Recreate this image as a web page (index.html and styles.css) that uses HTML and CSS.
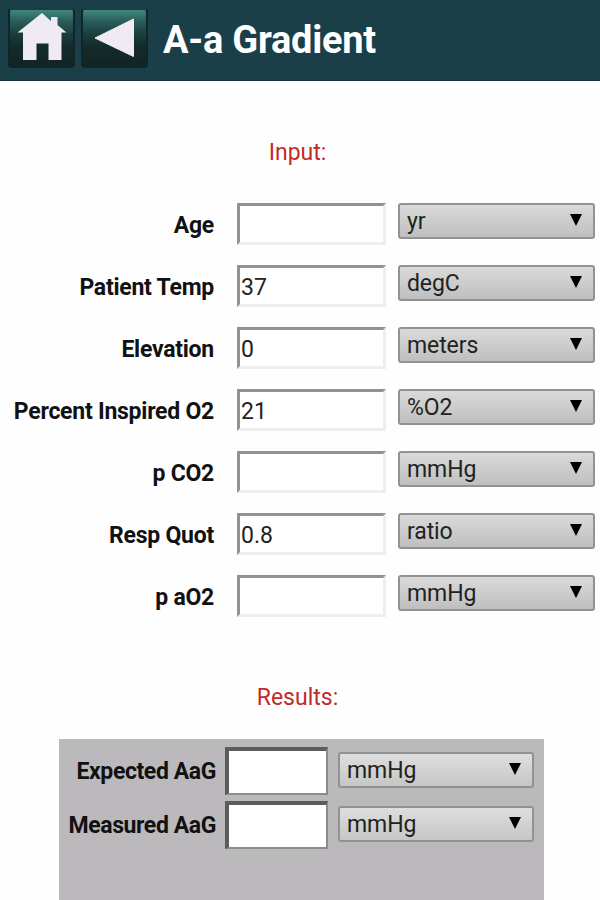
FILE: index.html
```html
<!DOCTYPE html>
<html lang="en">
<head>
    <meta charset="UTF-8">
    <meta name="viewport" content="width=device-width, initial-scale=1.0">
    <title>A-a Gradient</title>
    <link rel="stylesheet" href="styles.css">
</head>
<body>
    <header>
        <a class="nav-button" href="#" aria-label="Home">
            <svg width="50" height="48" viewBox="0 0 50 48">
                <path d="M25 0 L34 8 V4 H40.500 V12 L49.500 19.500 H44.500 V47 H31.500 V30.500 H19.500 V47 H6 V19.500 H0.500 Z" fill="#f0eaf2"/>
            </svg>
        </a>
        <a class="nav-button" href="#" aria-label="Back">
            <svg width="50" height="48" viewBox="0 0 50 48">
                <path d="M5 25 L43.500 6 V43.500 Z" fill="#f0eaf2" stroke="#f0eaf2" stroke-linejoin="round"/>
            </svg>
        </a>
        <h1>A-a Gradient</h1>
    </header>

    <main>
        <!-- Input Section -->
        <h2>Input:</h2>
        <form class="inputs">
            <div class="row">
                <label for="age">Age</label>
                <input type="text" id="age">
                <div class="unit"><select><option>yr</option></select></div>
            </div>
            <div class="row">
                <label for="temp">Patient Temp</label>
                <input type="text" id="temp" value="37">
                <div class="unit"><select><option>degC</option></select></div>
            </div>
            <div class="row">
                <label for="elevation">Elevation</label>
                <input type="text" id="elevation" value="0">
                <div class="unit"><select><option>meters</option></select></div>
            </div>
            <div class="row">
                <label for="fio2">Percent Inspired O2</label>
                <input type="text" id="fio2" value="21">
                <div class="unit"><select><option>%O2</option></select></div>
            </div>
            <div class="row">
                <label for="pco2">p CO2</label>
                <input type="text" id="pco2">
                <div class="unit"><select><option>mmHg</option></select></div>
            </div>
            <div class="row">
                <label for="quot">Resp Quot</label>
                <input type="text" id="quot" value="0.8">
                <div class="unit"><select><option>ratio</option></select></div>
            </div>
            <div class="row">
                <label for="pao2">p aO2</label>
                <input type="text" id="pao2">
                <div class="unit"><select><option>mmHg</option></select></div>
            </div>
        </form>

        <!-- Results Section -->
        <h2 class="results-title">Results:</h2>
        <section class="results">
            <div class="row">
                <label for="expected">Expected AaG</label>
                <input type="text" id="expected" readonly>
                <div class="unit"><select><option>mmHg</option></select></div>
            </div>
            <div class="row">
                <label for="measured">Measured AaG</label>
                <input type="text" id="measured" readonly>
                <div class="unit"><select><option>mmHg</option></select></div>
            </div>
        </section>
    </main>
</body>
</html>
```

FILE: styles.css
```css
* {
    box-sizing: border-box;
}
body {
    margin: 0;
    height: 900px;
    overflow: hidden;
    background: #fefefe;
    color: #111;
    font-family: Roboto, sans-serif;
    font-size: 23px;
}
header {
    display: flex;
    height: 81px;
    padding: 8px 8px 0;
    gap: 6px;
    background: #1b3f49;
    border-bottom: 1px solid #14323b;
}
.nav-button {
    display: flex;
    justify-content: center;
    width: 67px;
    height: 60px;
    padding-top: 3px;
    border: 2px solid #10262b;
    border-top-color: #1a3d42;
    border-radius: 4px;
    background: linear-gradient(#438781 0%, #2c605e 18%, #1a3f3f 42%, #142b2b 65%, #122423 100%);
}
h1 {
    margin: 10px 0 0 9px;
    color: #fff;
    font-size: 38px;
    line-height: 45px;
    font-weight: 700;
    letter-spacing: -0.25px;
}
main {
    display: flex;
    flex-direction: column;
    height: 819px;
}
h2 {
    width: 595px;
    margin: 58px 0 0;
    color: #c22a2a;
    font-size: 23px;
    line-height: 28px;
    font-weight: 400;
    text-align: center;
}
.inputs {
    display: flex;
    flex-direction: column;
    gap: 20px;
    margin-top: 36px;
}
.row {
    display: grid;
    column-gap: 12px;
    height: 42px;
}
.inputs .row {
    grid-template-columns: 225px 149px 197px;
}
label {
    padding-right: 11px;
    font-weight: 700;
    line-height: 45px;
    letter-spacing: -0.25px;
    text-align: right;
    white-space: nowrap;
}
input {
    width: 100%;
    height: 42px;
    padding: 2px 1px 0;
    border: 3px solid;
    border-color: #929292 #eee #eee #929292;
    background: #fff;
    color: #222;
    font: inherit;
}
.unit {
    position: relative;
    height: 36px;
}
.unit::after {
    content: "";
    position: absolute;
    top: 11px;
    right: 13px;
    border: 6px solid transparent;
    border-top: 12px solid #000;
    border-bottom: 0;
    pointer-events: none;
}
select {
    appearance: none;
    width: 100%;
    height: 100%;
    padding: 0 7px;
    border: 2px solid #929292;
    border-radius: 3px;
    background: linear-gradient(#dadada, #bfbfbf);
    color: #222;
    font: inherit;
    letter-spacing: -0.1px;
}
.results-title {
    margin-top: 67px;
}
.results {
    flex: 1;
    width: 485px;
    margin: 27px 0 0 59px;
    padding-top: 8px;
    background: #bcb9bc;
}
.results .row {
    grid-template-columns: 157px 103px 197px;
    column-gap: 9px;
    height: 54px;
}
.results label {
    padding-right: 0;
    line-height: 49px;
    letter-spacing: -0.4px;
}
.results input {
    height: 48px;
    border-width: 4px 2px 2px 4px;
    border-color: #5c5c5c #8c8c8c #8c8c8c #5c5c5c;
}
.results .unit {
    margin: 5px 0 0 1px;
}
.results select {
    background: linear-gradient(#dedede, #c6c6c6);
}
```
